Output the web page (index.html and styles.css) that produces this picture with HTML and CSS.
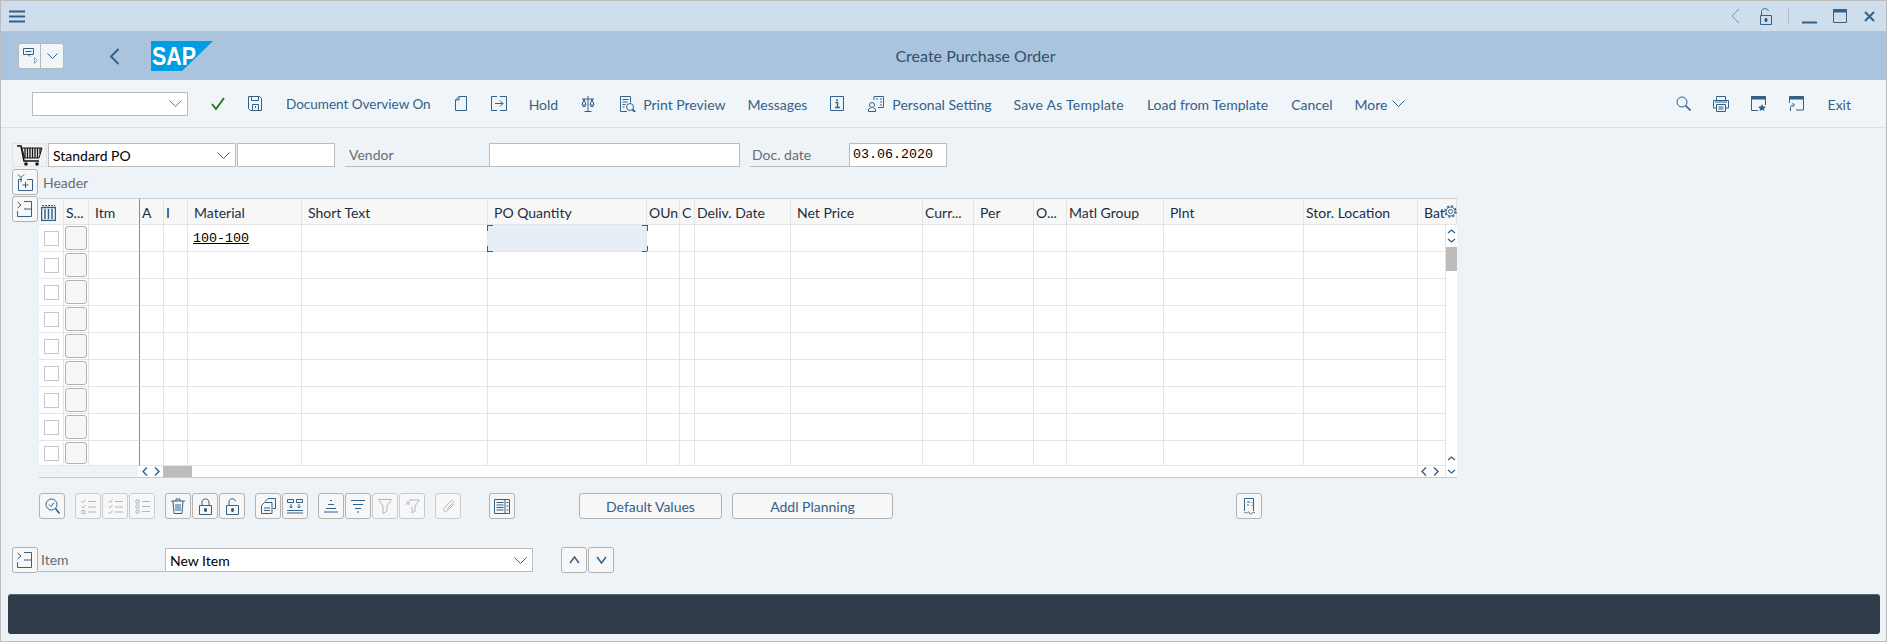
FILE: index.html
```html
<!DOCTYPE html>
<html lang="en">
<head>
    <meta charset="UTF-8">
    <meta name="viewport" content="width=device-width, initial-scale=1.0">
    <title>Create Purchase Order</title>
    <link rel="stylesheet" href="styles.css">
</head>
<body>
<div class="app">
    <div class="titlebar">
        <svg class="ic hamburger" width="16" height="13" viewBox="0 0 16 13"><path d="M0 1.500h16M0 6.500h16M0 11.500h16" stroke-width="2"/></svg>
        <div class="window-btns">
            <svg class="ic" width="9" height="16" viewBox="0 0 9 16"><path d="M8 1 1 8l7 7" stroke="#6f93b3"/></svg>
            <svg class="ic lock" width="12" height="17" viewBox="0 0 12 17"><path d="M1.500 7.500V3.500C1.500 0 7-.5 8.500 3M.5 7.500h11v9H.500z"/><path d="M6 10v4M4.500 12h3" stroke-width="2"/></svg>
            <span class="sep"></span>
            <svg class="ic" width="15" height="3" viewBox="0 0 15 3"><path d="M0 1.500h15" stroke-width="2"/></svg>
            <svg class="ic" width="14" height="14" viewBox="0 0 14 14"><path d="M.5 .5h13v13H.500z"/><path d="M0 2h14" stroke-width="3"/></svg>
            <svg class="ic" width="11" height="11" viewBox="0 0 11 11"><path d="m1 1 9 9M10 1l-9 9" stroke-width="2"/></svg>
        </div>
    </div>

    <div class="shellbar">
        <div class="menu-btn">
            <span class="menu-left"><svg class="ic" width="16" height="17" viewBox="0 0 16 17"><path d="M.5 .5h10v6h-10zM2.500 3.500h6" /><path d="m5 6.500 2 2"/><path d="m11.500 9.500 3 3-3 3z" stroke="#8fa9c0"/></svg></span>
            <span class="menu-right"><svg class="ic" width="11" height="6" viewBox="0 0 11 6"><path d="m.5 .5 5 5 5-5"/></svg></span>
        </div>
        <svg class="ic back" width="11" height="17" viewBox="0 0 11 17"><path d="M9.500 1 2 8.500 9.500 16" stroke-width="2"/></svg>
        <svg class="sap-logo" width="62" height="30" viewBox="0 0 62 30">
            <path d="M0 0h62L31 30H0z" fill="#009de0"/>
            <text x="1" y="24" class="sap-text" textLength="44" lengthAdjust="spacingAndGlyphs">SAP</text>
        </svg>
        <div class="shell-title">Create Purchase Order</div>
    </div>

    <div class="toolbar">
        <div class="cmd-field"><svg class="ic" width="13" height="7" viewBox="0 0 13 7"><path d="m.5 .5 6 6 6-6" stroke="#5d7f9c"/></svg></div>
        <svg class="ic t-check" width="14" height="13" viewBox="0 0 14 13"><path d="m1 7 4 5L13 1" stroke="#2b7c2b" stroke-width="2"/></svg>
        <svg class="ic t-save" width="14" height="15" viewBox="0 0 14 15"><path d="M.5 .5h11l2 2v12H2.500l-2-2zM3.500 .5v4h7v-4M4.500 14.500v-6h6v6M7.500 10v2"/></svg>
        <span class="t-text t-doc">Document Overview On</span>
        <svg class="ic t-new" width="12" height="15" viewBox="0 0 12 15"><path d="M.5 4 4 .5h7.500v14H.5zM.5 4H4V.5"/></svg>
        <svg class="ic t-other" width="16" height="15" viewBox="0 0 16 15"><path d="M6 .5H.5v14H6M9 .5h6.500v14H9M4 7.500h8M9 4.500l3 3-3 3"/></svg>
        <span class="t-text t-hold">Hold</span>
        <svg class="ic t-scale" width="14" height="16" viewBox="0 0 14 16"><path d="M7 0v15M3.500 15.500h7M1 3h12M3 3 1 9h4zM11 3 9 9h4zM1 9.500c1 1.500 3 1.500 4 0M9 9.500c1 1.500 3 1.500 4 0"/></svg>
        <svg class="ic t-preview" width="16" height="16" viewBox="0 0 16 16"><path d="M7 15.500H.5V.5h10v6M2.500 3.500h6M2.500 6h5M2.500 8.500h3M2.500 11h2"/><circle cx="10" cy="11" r="3.500"/><path d="m12.500 13.500 2.500 2.500" stroke-width="2"/></svg>
        <span class="t-text t-print">Print Preview</span>
        <span class="t-text t-msg">Messages</span>
        <svg class="ic t-info" width="14" height="15" viewBox="0 0 14 15"><path d="M.5 .5h13v14H.500z"/><path d="M5.500 6.500H7.500v5M5 11.500h5M7 3v2" stroke-width="1.400"/></svg>
        <svg class="ic t-person" width="16" height="16" viewBox="0 0 16 16"><circle cx="4" cy="9" r="2.500"/><path d="M.5 15.500v-2.500l2-1M7.500 15.500v-2.500l-2-1M.5 15.500h7M6 4V.5h9.500v11H10M8 3h2M12 3h2M12 6h2M12 9h2"/></svg>
        <span class="t-text t-personal">Personal Setting</span>
        <span class="t-text t-tpl">Save As Template</span>
        <span class="t-text t-load">Load from Template</span>
        <span class="t-text t-cancel">Cancel</span>
        <span class="t-text t-more">More</span>
        <svg class="ic t-more-arrow" width="13" height="7" viewBox="0 0 13 7"><path d="m.5 .5 6 6 6-6"/></svg>
        <svg class="ic t-search" width="15" height="15" viewBox="0 0 15 15"><circle cx="6" cy="6" r="5"/><path d="m9.500 9.500 5 5" stroke-width="1.600"/></svg>
        <svg class="ic t-printer" width="16" height="16" viewBox="0 0 16 16"><path d="M3.500 4V.5h9V4M3.500 12H.5V4.500h15V12h-3M3.500 8.500h9v7h-9zM5.500 11h5M5.500 13h5M2 6h12"/></svg>
        <svg class="ic t-win" width="15" height="15" viewBox="0 0 15 15"><path d="M7 14.500H.5V.5h14V9"/><path d="M0 2h15" stroke-width="3"/><path class="solid" d="m11 8 1.200 2.500 2.800.3-2 1.900.5 2.300-2.500-1.200-2.500 1.200.5-2.300-2-1.900 2.800-.3z"/></svg>
        <svg class="ic t-win2" width="15" height="15" viewBox="0 0 15 15"><path d="M.5 7V.5h14v13.500H7"/><path d="M0 2h15" stroke-width="3"/><path d="M1.500 15v-3.500c0-1.500 1-2.500 3-2.500M3.500 7l2 2-2 2"/></svg>
        <span class="t-text t-exit">Exit</span>
    </div>

    <div class="content">
        <div class="po-row">
            <button class="btn cart-btn"><svg width="26" height="21" viewBox="0 0 26 21"><path d="M0 1h4l3 15h15" fill="none" stroke="#111" stroke-width="1.500"/><path d="M5 3h20l-3 10H7.500z" fill="#f2f2f2" stroke="#111"/><path d="M8 3v10M10.500 3v10M13 3v10M15.500 3v10M18 3v10M20.500 3v10M23 3v6" stroke="#111" stroke-width="1.300"/><circle cx="9" cy="19" r="1.800" fill="#111"/><circle cx="20" cy="19" r="1.800" fill="#111"/></svg></button>
            <div class="field select po-type">Standard PO<svg class="ic" width="13" height="7" viewBox="0 0 13 7"><path d="m.5 .5 6 6 6-6"/></svg></div>
            <div class="field po-num"></div>
            <div class="label vendor-label">Vendor</div>
            <div class="field vendor-field"></div>
            <div class="label date-label">Doc. date</div>
            <div class="field date-field mono">03.06.2020</div>
        </div>

        <div class="header-row">
            <button class="btn"><svg class="ic" width="16" height="17" viewBox="0 0 16 17"><path d="M5 5.500H1.500v11h14v-11H10M8.500 8v6M5.500 11h6M1 .5l3 3M7 .5l-3 3M4 3.500V8"/></svg></button>
            <span class="label-plain">Header</span>
        </div>

        <div class="table-area">
            <button class="btn"><svg class="ic" width="16" height="16" viewBox="0 0 16 16"><path d="M.5 1 4 4 .5 7M.5 10v5.500h14V.5H7M7 8h7"/></svg></button>
            <div class="grid">
                <div class="grid-row grid-head">
                    <div class="cell"><svg class="ic" width="15" height="17" viewBox="0 0 15 17"><path d="M.5 3.500h14v13H.500zM4 5v10M7.500 5v10M11 5v10" stroke-width="1.500"/><path d="M1 1.500h13" stroke-dasharray="2 1"/></svg></div>
                    <div class="cell">S...</div><div class="cell pad divider">Itm</div><div class="cell">A</div><div class="cell">I</div>
                    <div class="cell pad">Material</div><div class="cell pad">Short Text</div><div class="cell pad">PO Quantity</div>
                    <div class="cell">OUn</div><div class="cell">C</div><div class="cell">Deliv. Date</div><div class="cell pad">Net Price</div>
                    <div class="cell">Curr...</div><div class="cell pad">Per</div><div class="cell">O...</div><div class="cell">Matl Group</div>
                    <div class="cell pad">Plnt</div><div class="cell">Stor. Location</div><div class="cell pad">Bat</div>
                </div>
                <div class="grid-row">
                    <div class="cell sel"><span class="check"></span></div><div class="cell sel"><span class="row-btn"></span></div><div class="cell divider"></div><div class="cell"></div><div class="cell"></div>
                    <div class="cell mono material">100-100</div><div class="cell"></div>
                    <div class="cell active"><i class="tl"></i><i class="tr"></i><i class="bl"></i><i class="br"></i></div>
                    <div class="cell"></div><div class="cell"></div><div class="cell"></div><div class="cell"></div><div class="cell"></div><div class="cell"></div><div class="cell"></div><div class="cell"></div><div class="cell"></div><div class="cell"></div><div class="cell"></div>
                </div>
                <div class="grid-row"><div class="cell sel"><span class="check"></span></div><div class="cell sel"><span class="row-btn"></span></div><div class="cell divider"></div><div class="cell"></div><div class="cell"></div><div class="cell"></div><div class="cell"></div><div class="cell"></div><div class="cell"></div><div class="cell"></div><div class="cell"></div><div class="cell"></div><div class="cell"></div><div class="cell"></div><div class="cell"></div><div class="cell"></div><div class="cell"></div><div class="cell"></div><div class="cell"></div></div>
                <div class="grid-row"><div class="cell sel"><span class="check"></span></div><div class="cell sel"><span class="row-btn"></span></div><div class="cell divider"></div><div class="cell"></div><div class="cell"></div><div class="cell"></div><div class="cell"></div><div class="cell"></div><div class="cell"></div><div class="cell"></div><div class="cell"></div><div class="cell"></div><div class="cell"></div><div class="cell"></div><div class="cell"></div><div class="cell"></div><div class="cell"></div><div class="cell"></div><div class="cell"></div></div>
                <div class="grid-row"><div class="cell sel"><span class="check"></span></div><div class="cell sel"><span class="row-btn"></span></div><div class="cell divider"></div><div class="cell"></div><div class="cell"></div><div class="cell"></div><div class="cell"></div><div class="cell"></div><div class="cell"></div><div class="cell"></div><div class="cell"></div><div class="cell"></div><div class="cell"></div><div class="cell"></div><div class="cell"></div><div class="cell"></div><div class="cell"></div><div class="cell"></div><div class="cell"></div></div>
                <div class="grid-row"><div class="cell sel"><span class="check"></span></div><div class="cell sel"><span class="row-btn"></span></div><div class="cell divider"></div><div class="cell"></div><div class="cell"></div><div class="cell"></div><div class="cell"></div><div class="cell"></div><div class="cell"></div><div class="cell"></div><div class="cell"></div><div class="cell"></div><div class="cell"></div><div class="cell"></div><div class="cell"></div><div class="cell"></div><div class="cell"></div><div class="cell"></div><div class="cell"></div></div>
                <div class="grid-row"><div class="cell sel"><span class="check"></span></div><div class="cell sel"><span class="row-btn"></span></div><div class="cell divider"></div><div class="cell"></div><div class="cell"></div><div class="cell"></div><div class="cell"></div><div class="cell"></div><div class="cell"></div><div class="cell"></div><div class="cell"></div><div class="cell"></div><div class="cell"></div><div class="cell"></div><div class="cell"></div><div class="cell"></div><div class="cell"></div><div class="cell"></div><div class="cell"></div></div>
                <div class="grid-row"><div class="cell sel"><span class="check"></span></div><div class="cell sel"><span class="row-btn"></span></div><div class="cell divider"></div><div class="cell"></div><div class="cell"></div><div class="cell"></div><div class="cell"></div><div class="cell"></div><div class="cell"></div><div class="cell"></div><div class="cell"></div><div class="cell"></div><div class="cell"></div><div class="cell"></div><div class="cell"></div><div class="cell"></div><div class="cell"></div><div class="cell"></div><div class="cell"></div></div>
                <div class="grid-row"><div class="cell sel"><span class="check"></span></div><div class="cell sel"><span class="row-btn"></span></div><div class="cell divider"></div><div class="cell"></div><div class="cell"></div><div class="cell"></div><div class="cell"></div><div class="cell"></div><div class="cell"></div><div class="cell"></div><div class="cell"></div><div class="cell"></div><div class="cell"></div><div class="cell"></div><div class="cell"></div><div class="cell"></div><div class="cell"></div><div class="cell"></div><div class="cell"></div></div>
                <div class="grid-row last"><div class="cell sel"><span class="check"></span></div><div class="cell sel"><span class="row-btn"></span></div><div class="cell divider"></div><div class="cell"></div><div class="cell"></div><div class="cell"></div><div class="cell"></div><div class="cell"></div><div class="cell"></div><div class="cell"></div><div class="cell"></div><div class="cell"></div><div class="cell"></div><div class="cell"></div><div class="cell"></div><div class="cell"></div><div class="cell"></div><div class="cell"></div><div class="cell"></div></div>
                <div class="hscroll">
                    <span class="hs-empty"></span>
                    <span class="hs-arrows"><svg class="ic" width="6" height="9" viewBox="0 0 6 9"><path d="M5 .5 1 4.500l4 4" stroke-width="1.400"/></svg><svg class="ic" width="6" height="9" viewBox="0 0 6 9"><path d="m1 .5 4 4-4 4" stroke-width="1.400"/></svg></span>
                    <span class="hs-thumb"></span>
                    <span class="hs-track"></span>
                    <span class="hs-arrows hs-end"><svg class="ic" width="6" height="9" viewBox="0 0 6 9"><path d="M5 .5 1 4.500l4 4" stroke-width="1.400"/></svg><svg class="ic" width="6" height="9" viewBox="0 0 6 9"><path d="m1 .5 4 4-4 4" stroke-width="1.400"/></svg></span>
                </div>
                <svg class="ic gear" width="13" height="13" viewBox="0 0 13 13"><circle cx="6.500" cy="6.500" r="2"/><circle cx="6.500" cy="6.500" r="4.500" stroke-width="1"/><circle cx="6.500" cy="6.500" r="5.500" stroke-width="1.500" stroke-dasharray="2 2.320"/></svg>
                <div class="vscroll">
                    <svg class="ic" width="9" height="5" viewBox="0 0 9 5"><path d="m1 4 3.500-3L8 4" stroke-width="1.300"/></svg>
                    <svg class="ic" width="9" height="5" viewBox="0 0 9 5"><path d="m1 1 3.500 3L8 1" stroke-width="1.300"/></svg>
                    <span class="vs-thumb"></span>
                    <span class="vs-track"></span>
                    <svg class="ic" width="9" height="5" viewBox="0 0 9 5"><path d="m1 4 3.500-3L8 4" stroke-width="1.300"/></svg>
                    <svg class="ic vs-last" width="9" height="5" viewBox="0 0 9 5"><path d="m1 1 3.500 3L8 1" stroke-width="1.300"/></svg>
                </div>
            </div>
        </div>

        <div class="tools">
            <button class="btn"><svg class="ic" width="15" height="16" viewBox="0 0 15 16"><circle cx="6.500" cy="6.500" r="5.500"/><path d="m10.500 10.500 4 5" stroke-width="1.600"/><path d="m4 6.500 2 2 3-4"/></svg></button>
            <div class="tool-group">
                <button class="btn off"><svg class="ic" width="15" height="15" viewBox="0 0 15 15"><path d="m.5 2 1.500 1.500L4.500 .5M.5 7.500 2 9l2.500-3M1 11.500h3v3H1zM7 2.500h8M7 8h8M7 13h8"/></svg></button>
                <button class="btn off"><svg class="ic" width="15" height="15" viewBox="0 0 15 15"><path d="m.5 2 1.500 1.500L4.500 .5M.5 7.500 2 9l2.500-3M.5 13 2 14.500 4.500 11.500M7 2.500h8M7 8h8M7 13h8"/></svg></button>
                <button class="btn off"><svg class="ic" width="15" height="15" viewBox="0 0 15 15"><path d="M1 1h3v3H1zM1 6h3v3H1zM1 11h3v3H1zM7 2.500h8M7 7.500h8M7 12.500h8"/></svg></button>
            </div>
            <div class="tool-group">
                <button class="btn"><svg class="ic" width="14" height="16" viewBox="0 0 14 16"><path d="M0 3h14M5 3V1h4v2M2 3l1 12.500h8L12 3M5 6v7M7 6v7M9 6v7"/></svg></button>
                <button class="btn"><svg class="ic" width="13" height="17" viewBox="0 0 13 17"><path d="M3 7.500V4c0-4 7-4 7 0v3.500M.5 7.500h12v9H.500z"/><path d="M6.500 10v4M5 12h3" stroke-width="2"/></svg></button>
                <button class="btn"><svg class="ic" width="13" height="17" viewBox="0 0 13 17"><path d="M3 7.500V4c0-4 6-4.500 6.500-.5M.5 7.500h12v9H.500z"/><path d="M6.500 10v4M5 12h3" stroke-width="2"/></svg></button>
            </div>
            <div class="tool-group">
                <button class="btn"><svg class="ic" width="15" height="16" viewBox="0 0 15 16"><path d="M4 3.500 7 .5h7.500v10H12M.5 7.500l3-3h7.500v11H.500zM3 10h6M3 12.500h6"/></svg></button>
                <button class="btn"><svg class="ic" width="16" height="15" viewBox="0 0 16 15"><path d="M.5 .5h6v3h-6zM9.500 .5h6v3h-6zM0 11.500h16M0 14h16M4 5v4M2.500 7.500 4 9l1.500-1.500M12 5v4M10.500 7.500 12 9l1.500-1.500" /></svg></button>
            </div>
            <div class="tool-group">
                <button class="btn"><svg class="ic" width="14" height="13" viewBox="0 0 14 13"><path d="M6 .5h2M4 4.500h6M2 8.500h10M0 12h14"/></svg></button>
                <button class="btn"><svg class="ic" width="14" height="13" viewBox="0 0 14 13"><path d="M0 .5h14M2 4.500h10M4 8.500h6M6 12h2"/></svg></button>
                <button class="btn off"><svg class="ic" width="14" height="15" viewBox="0 0 14 15"><path d="M.5 .5h13L9 7v5l-4 2.500V7z"/></svg></button>
                <button class="btn off"><svg class="ic" width="15" height="15" viewBox="0 0 15 15"><path d="M4 1h10.500L10 7v5l-3 2V8M1 6l3-3M1 3h3v3"/></svg></button>
            </div>
            <button class="btn off"><svg class="ic" width="15" height="15" viewBox="0 0 15 15"><path d="M13 5 6 12c-2 2-5-1-3-3l7-7c1.500-1.500 3.500.5 2 2L5.500 10.500"/></svg></button>
            <button class="btn gap-md"><svg class="ic" width="16" height="15" viewBox="0 0 16 15"><path d="M.5 .5h15v14H.500zM11 .5v14M2.500 3.500h7M2.500 6h7M2.500 8.500h7M2.500 11h7M12.500 3.500h2M12.500 7h2M12.500 11h2"/></svg></button>
            <button class="btn text-btn default-btn">Default Values</button>
            <button class="btn text-btn addl-btn">Addl Planning</button>
            <button class="btn gap-xl"><svg class="ic" width="11" height="17" viewBox="0 0 11 17"><path d="M.5 13V.5h9V13M3 4h3M3 7h2M8 4v1M8 7v1"/><path d="M0 15c1.500-2 2 1 3 0s1.500-2 2.500 0 2 1 2.500 0 2-1 3 0"/></svg></button>
        </div>

        <div class="item-row">
            <button class="btn"><svg class="ic" width="16" height="16" viewBox="0 0 16 16"><path d="M.5 1 4 4 .5 7M.5 10v5.500h14V.5H7M7 8h7"/></svg></button>
            <div class="label item-label">Item</div>
            <div class="field select item-select">New Item<svg class="ic" width="13" height="7" viewBox="0 0 13 7"><path d="m.5 .5 6 6 6-6"/></svg></div>
            <button class="btn step-first"><svg class="ic" width="11" height="8" viewBox="0 0 11 8"><path d="m1 7 4.500-6L10 7" stroke-width="1.500"/></svg></button>
            <button class="btn step-next"><svg class="ic" width="11" height="8" viewBox="0 0 11 8"><path d="m1 1 4.500 6L10 1" stroke-width="1.500"/></svg></button>
        </div>
    </div>

    <div class="statusbar"></div>
</div>
</body>
</html>
```
FILE: styles.css
```css
* {
    box-sizing: border-box;
}
html, body {
    margin: 0;
    padding: 0;
    height: 100%;
    overflow: hidden;
}
body {
    font-family: Lato, Arial, sans-serif;
    font-size: 14px;
    color: #32363a;
    background-color: #eef3f8;
}
.app {
    height: 642px;
    display: flex;
    flex-direction: column;
    border: 1px solid #bcbcbc;
    background-color: #eef3f8;
}
.ic {
    fill: none;
    stroke: #346187;
    stroke-width: 1;
    flex: none;
    display: block;
}
.ic .solid {
    fill: #346187;
    stroke: none;
}
.mono {
    font-family: "Liberation Mono", monospace;
    font-size: 13.33px;
    color: #000;
}

/* title bar */
.titlebar {
    height: 31px;
    flex: none;
    display: flex;
    align-items: center;
    justify-content: space-between;
    background-color: #cfdeec;
    border-bottom: 1px solid #b9c4cd;
    padding: 0 11px 0 8px;
}
.window-btns {
    display: flex;
    align-items: center;
}
.window-btns svg:nth-child(2) {
    margin-left: 20px;
}
.sep {
    width: 1px;
    height: 16px;
    background-color: #b8bcc0;
    margin: 0 13px 0 16px;
}
.window-btns svg:nth-child(4) {
    margin-top: 13px;
}
.window-btns svg:nth-child(5) {
    margin-left: 16px;
}
.window-btns svg:nth-child(6) {
    margin-left: 17px;
}

/* blue header */
.shellbar {
    height: 48px;
    flex: none;
    display: flex;
    align-items: center;
    background-color: #a9c4dc;
    padding-left: 17px;
}
.menu-btn {
    width: 46px;
    height: 26px;
    display: flex;
    background-color: #f2f5f8;
    border: 1px solid #b4b9bd;
    border-radius: 3px;
}
.menu-left {
    width: 22px;
    border-right: 1px solid #b4b9bd;
    display: flex;
    align-items: center;
    justify-content: center;
    padding-left: 2px;
}
.menu-right {
    flex: 1;
    display: flex;
    align-items: center;
    justify-content: center;
}
.back {
    margin-left: 45px;
}
.sap-logo {
    margin-left: 31px;
    flex: none;
}
.sap-text {
    font-family: "Liberation Sans", sans-serif;
    font-weight: bold;
    font-size: 26px;
    fill: #fff;
}
.shell-title {
    flex: 1;
    text-align: center;
    color: #32506e;
    font-size: 16px;
    padding: 0 148px 2px 0;
}

/* application toolbar */
.toolbar {
    height: 48px;
    flex: none;
    display: flex;
    align-items: center;
    background-color: #f0f5f9;
    border-bottom: 1px solid #d5e2ee;
    padding-left: 31px;
}
.t-text {
    color: #346187;
    white-space: nowrap;
    padding-top: 1px;
}
.cmd-field {
    width: 156px;
    height: 24px;
    background-color: #fff;
    border: 1px solid #bcbcbc;
    display: flex;
    align-items: center;
    justify-content: flex-end;
    padding-right: 5px;
}
.t-check { margin-left: 23px; }
.t-save { margin-left: 23px; }
.t-doc { margin-left: 24px; font-size: 13.5px; }
.t-new { margin-left: 24px; }
.t-other { margin-left: 24px; }
.t-hold { margin-left: 22px; }
.t-scale { margin-left: 23px; }
.t-preview { margin-left: 25px; }
.t-print { margin-left: 7px; }
.t-msg { margin-left: 22px; }
.t-info { margin-left: 23px; }
.t-person { margin-left: 24px; }
.t-personal { margin-left: 8px; }
.t-tpl { margin-left: 22px; letter-spacing: 0.25px; }
.t-load { margin-left: 23px; }
.t-cancel { margin-left: 23px; }
.t-more { margin-left: 22px; }
.t-more-arrow { margin-left: 5px; }
.t-search { margin-left: auto; }
.t-printer { margin-left: 22px; }
.t-win { margin-left: 22px; }
.t-win2 { margin-left: 23px; }
.t-exit { margin-left: 24px; margin-right: 35px; }

/* form */
.content {
    flex: 1;
    padding: 15px 0 0 11px;
}
.po-row {
    display: flex;
    height: 24px;
}
.field {
    height: 24px;
    background-color: #fff;
    border: 1px solid #bcbcbc;
    color: #000;
    display: flex;
    align-items: center;
    flex: none;
}
.select {
    justify-content: space-between;
    padding: 0 5px 0 4px;
}
.label {
    color: #6a6d70;
    border-bottom: 1px solid #bcbcbc;
    display: flex;
    align-items: center;
    flex: none;
}
.btn {
    width: 26px;
    height: 26px;
    padding: 0;
    flex: none;
    display: flex;
    align-items: center;
    justify-content: center;
    background-color: #f7f7f7;
    border: 1px solid #b2b2b2;
    border-radius: 3px;
    font-family: inherit;
    font-size: 14px;
    color: #346187;
}
.btn.off {
    border-color: #c9cccf;
}
.btn.off .ic {
    opacity: 0.4;
}
.cart-btn {
    width: 35px;
    height: 24px;
    border: 1px solid #dfe3e6;
    border-radius: 0;
    background-color: #f2f2f2;
}
.po-type { width: 188px; margin-left: 1px; }
.po-num { width: 98px; margin-left: 1px; }
.vendor-label { width: 144px; margin-left: 10px; padding-left: 4px; }
.vendor-field { width: 251px; }
.date-label { width: 99px; margin-left: 10px; padding-left: 2px; }
.date-field { width: 98px; padding-left: 3px; padding-bottom: 2px; }
.header-row {
    display: flex;
    align-items: center;
    margin-top: 2px;
}
.label-plain {
    color: #6a6d70;
    margin-left: 5px;
}
.table-area {
    display: flex;
    align-items: flex-start;
    margin-top: 1px;
}

/* table */
.grid {
    position: relative;
    width: 1418px;
    margin-left: 1px;
    margin-top: 2px;
    flex: none;
    border-top: 1px solid #ccc;
    border-bottom: 1px solid #ccc;
    background-color: #fff;
}
.grid-row {
    display: grid;
    grid-template-columns: 25px 25px 51px 24px 24px 114px 186px 159px 33px 15px 96px 132px 51px 60px 33px 97px 140px 114px 39px;
    height: 27px;
}
.grid-head {
    height: 26px;
    background-color: #f7f7f7;
    color: #1d2d3e;
}
.grid-head .cell {
    padding-top: 1px;
}
.grid-row.last {
    height: 25px;
}
.cell {
    position: relative;
    border-right: 1px solid #e4e4e4;
    border-bottom: 1px solid #e4e4e4;
    display: flex;
    align-items: center;
    padding-left: 2px;
    white-space: nowrap;
    overflow: hidden;
}
.cell.pad {
    padding-left: 6px;
}
.cell.divider {
    border-right-color: #8c8c8c;
}
.cell.sel {
    justify-content: center;
    padding: 0;
}
.check {
    width: 15px;
    height: 15px;
    background-color: #fff;
    border: 1px solid #c6c6cc;
}
.row-btn {
    width: 22px;
    height: 24px;
    background-color: #f7f7f7;
    border: 1px solid #b2b2b2;
    border-radius: 3px;
}
.last .row-btn {
    height: 22px;
}
.material {
    padding-left: 5px;
    text-decoration: underline;
}
.active {
    background-color: #e8eef6;
    overflow: visible;
}
.active i {
    position: absolute;
    width: 6px;
    height: 6px;
    border: 0 solid #346187;
}
.active .tl { left: -1px; top: 0; border-width: 1px 0 0 1px; }
.active .tr { right: -2px; top: 0; border-width: 1px 1px 0 0; }
.active .bl { left: -1px; bottom: -1px; border-width: 0 0 1px 1px; }
.active .br { right: -2px; bottom: -1px; border-width: 0 1px 1px 0; }
.hscroll {
    height: 11px;
    display: flex;
    background-color: #fff;
}
.hs-empty {
    width: 99px;
    background-color: #eef3f8;
}
.hs-arrows {
    width: 25px;
    display: flex;
    align-items: center;
    justify-content: center;
    gap: 6px;
}
.hs-thumb {
    width: 29px;
    background-color: #bcbcbc;
}
.hs-track {
    flex: 1;
}
.hs-end {
    margin-right: 15px;
    border-left: 1px solid #e4e4e4;
}
.gear {
    position: absolute;
    right: 0;
    top: 6px;
}
.vscroll {
    position: absolute;
    right: 0;
    top: 26px;
    bottom: 0;
    width: 12px;
    background-color: #fff;
    border-left: 1px solid #e4e4e4;
    display: flex;
    flex-direction: column;
    align-items: center;
    padding-top: 4px;
}
.vscroll svg:nth-child(2) {
    margin-top: 4px;
}
.vs-thumb {
    width: 11px;
    height: 24px;
    background-color: #bcbcbc;
    margin-top: 4px;
    flex: none;
}
.vs-track {
    flex: 1;
}
.vs-last {
    margin-top: 8px;
    margin-bottom: 3px;
}

/* buttons under the table */
.tools {
    display: flex;
    gap: 10px;
    margin-top: 15px;
    padding-left: 27px;
}
.tool-group {
    display: flex;
    gap: 1px;
}
.gap-md { margin-left: 18px; }
.text-btn {
    height: 26px;
}
.default-btn { width: 143px; margin-left: 54px; }
.addl-btn { width: 161px; }
.gap-xl { margin-left: 333px; }
.item-row {
    display: flex;
    align-items: flex-start;
    margin-top: 28px;
}
.item-label {
    width: 127px;
    height: 25px;
    padding-left: 3px;
}
.item-select {
    width: 368px;
    margin-top: 1px;
}
.step-first { margin-left: 28px; }
.step-next { margin-left: 1px; }

/* message bar */
.statusbar {
    height: 40px;
    flex: none;
    margin: 0 6px 7px 7px;
    background-color: #303c49;
    border-top: 1px solid #5c6670;
    border-radius: 3px;
}
```
